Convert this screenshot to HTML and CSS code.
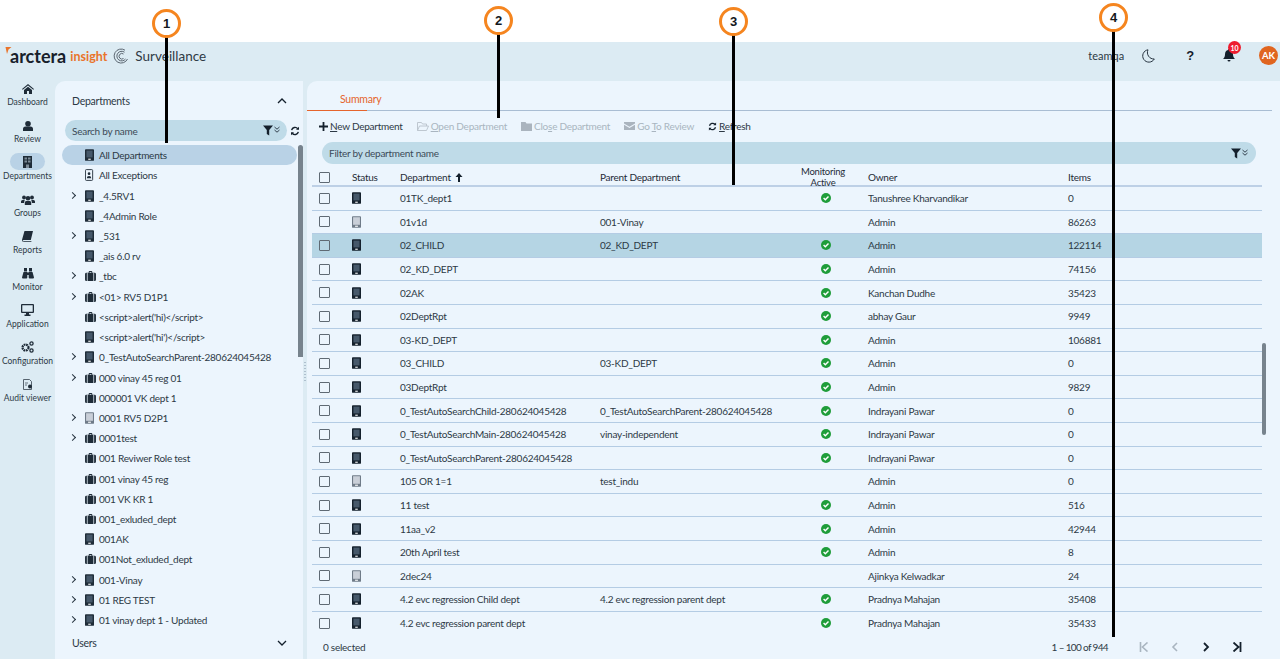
FILE: index.html
```html
<!DOCTYPE html>
<html lang="en">
<head>
<meta charset="utf-8">
<title>Arctera Insight Surveillance</title>
<link rel="stylesheet" href="styles.css">
</head>
<body>
<svg class="defs" width="0" height="0">
  <symbol id="dev" viewBox="0 0 10 13"><path d="M1 0h8a1 1 0 0 1 1 1v11a1 1 0 0 1-1 1H1a1 1 0 0 1-1-1V1a1 1 0 0 1 1-1z" fill="currentColor"/><rect x="1.6" y="1.6" width="6.8" height="7.6" fill="#46586a"/><rect x="3.6" y="10.6" width="2.8" height="1.2" fill="#fff"/></symbol>
  <symbol id="grey" viewBox="0 0 10 13"><path d="M1 0h8a1 1 0 0 1 1 1v11a1 1 0 0 1-1 1H1a1 1 0 0 1-1-1V1a1 1 0 0 1 1-1z" fill="#6f7b88"/><rect x="1.2" y="1.2" width="7.6" height="8.4" fill="#c9cfd8"/><rect x="3.4" y="10.6" width="3.2" height="1.2" fill="#fff"/></symbol>
  <symbol id="case" viewBox="0 0 12 11"><path d="M4 2V1a1 1 0 0 1 1-1h2a1 1 0 0 1 1 1v1h2.5A1.500 1.500 0 0 1 12 3.500V9.500A1.500 1.500 0 0 1 10.500 11H1.500A1.500 1.500 0 0 1 0 9.500V3.500A1.500 1.500 0 0 1 1.500 2zM5 1v1h2V1z" fill="#1f2c38" fill-rule="evenodd"/><path d="M2.500 2v9M9.500 2v9" stroke="#ecf5fd" stroke-width=".8"/></symbol>
  <symbol id="ok" viewBox="0 0 10 10"><circle cx="5" cy="5" r="5" fill="#1f9d3a"/><path d="M2.600 5.100l1.700 1.700 3.200-3.400" fill="none" stroke="#fff" stroke-width="1.400"/></symbol>
  <symbol id="funnel" viewBox="0 0 18 11"><path d="M0 .5h10L6.200 5v5.500L3.800 9V5z" fill="#14202c"/><path d="M11.500 2l2.500 2.200L16.500 2M11.500 5l2.500 2.200L16.500 5" fill="none" stroke="#33424f" stroke-width="1"/></symbol>
  <symbol id="sync" viewBox="0 0 12 12"><path d="M2 5a4.200 4.200 0 0 1 7.300-1.800M10 7a4.200 4.200 0 0 1-7.300 1.800" fill="none" stroke="#14202c" stroke-width="1.700"/><path d="M10.800 .8v3.600H7.200zM1.200 11.200V7.600h3.600z" fill="#14202c"/></symbol>
</svg>

<header class="topstrip"></header>
<div class="appbar">
  <div class="brand">
    <svg class="logo-mark" width="7" height="7" viewBox="0 0 6 7"><path d="M0 0h6L3 2.500 1.500 7z" fill="#e9742b"/></svg>
    <span class="logo-arctera">arctera</span>
    <span class="logo-insight">insight</span>
    <svg class="logo-swirl" width="16" height="16" viewBox="0 0 16 16" fill="none" stroke="#5a6570" stroke-width="1"><path d="M12 2.200A7 7 0 1 0 14.500 11M11.500 4.200A4.800 4.800 0 1 0 12.500 11M10.500 6A2.800 2.800 0 1 0 10.500 10.500"/></svg>
    <span class="logo-product">Surveillance</span>
  </div>
  <div class="bar-tools">
    <span class="user">teamqa</span>
    <svg class="moon" width="13" height="14" viewBox="0 0 13 14"><path d="M6 .8A6.200 6.200 0 1 0 12.300 10 6.500 6.500 0 0 1 6 .8z" fill="none" stroke="#26333f" stroke-width="1"/></svg>
    <span class="help">?</span>
    <span class="bell">
      <svg width="12" height="13" viewBox="0 0 12 13"><path d="M6 0a1 1 0 0 1 1 1.100C9 1.600 10 3.200 10 5.500c0 2.500 1 3.500 2 4.500H0c1-1 2-2 2-4.500C2 3.200 3 1.600 5 1.100A1 1 0 0 1 6 0zM4.500 11h3a1.500 1.500 0 0 1-3 0z" fill="#14202c"/></svg>
      <span class="badge">10</span>
    </span>
    <span class="avatar">AK</span>
  </div>
</div>

<div class="main">
  <nav class="rail">
    <a class="rail-item"><svg width="12" height="10" viewBox="0 0 12 10"><path d="M6 0l6 5-.7.800L6 1.500.7 5.800 0 5zM2 6l4-3.300L10 6v4H7V7H5v3H2z" fill="#1f2c38"/></svg><span>Dashboard</span></a>
    <a class="rail-item"><svg width="10" height="10" viewBox="0 0 10 10"><circle cx="5" cy="2.800" r="2.800" fill="#1f2c38"/><path d="M0 10V8a2.500 2.500 0 0 1 2.500-2.500h5A2.500 2.500 0 0 1 10 8v2z" fill="#1f2c38"/></svg><span>Review</span></a>
    <a class="rail-item is-active"><svg width="9" height="12" viewBox="0 0 9 12"><path d="M0 0h9v12H0z" fill="#1f2c38"/><path d="M1.500 1.500h2.500v2H1.500zM5 1.500h2.500v2H5zM1.500 4.500h2.500v2H1.500zM5 4.500h2.500v2H5zM3 8.500h3V12H3z" fill="#7d8b98"/></svg><span>Departments</span></a>
    <a class="rail-item"><svg width="14" height="10" viewBox="0 0 14 10" fill="#1f2c38"><circle cx="3" cy="2.500" r="1.900"/><circle cx="11" cy="2.500" r="1.900"/><circle cx="7" cy="3.200" r="2.300"/><path d="M0 8V6.500A1.500 1.500 0 0 1 1.500 5h2.200L3 8zM14 8V6.500A1.500 1.500 0 0 0 12.500 5h-2.200l.7 3zM3.800 10V7.500A1.500 1.500 0 0 1 5.300 6h3.400a1.500 1.500 0 0 1 1.500 1.500V10z"/></svg><span>Groups</span></a>
    <a class="rail-item"><svg width="11" height="11" viewBox="0 0 11 11"><path d="M2.500 0H11L8.800 9H1.800C.8 9 .5 9.500.8 10s.8.300 1.300.300H9.500L9.300 11H2C.5 11-.3 10 .1 8.500z" fill="#1f2c38"/></svg><span>Reports</span></a>
    <a class="rail-item"><svg width="12" height="12" viewBox="0 0 12 12" fill="#1f2c38"><path d="M2 1h3v3.500H2zM7 1h3v3.500H7z"/><path d="M1.500 5H5.300V10.500A1 1 0 0 1 4.300 11.500H1A1 1 0 0 1 0 10.500zM6.700 5H10.500L12 10.500A1 1 0 0 1 11 11.500H7.700A1 1 0 0 1 6.700 10.500zM5 5.500H7V8H5z"/></svg><span>Monitor</span></a>
    <a class="rail-item"><svg width="13" height="12" viewBox="0 0 13 12"><path d="M1 0h11a1 1 0 0 1 1 1v7a1 1 0 0 1-1 1H8v1.500h1.500V12h-6v-1.500H5V9H1a1 1 0 0 1-1-1V1a1 1 0 0 1 1-1zm.3 1.300v6.400h10.400V1.300z" fill="#1f2c38" fill-rule="evenodd"/></svg><span>Application</span></a>
    <a class="rail-item"><svg width="13" height="12" viewBox="0 0 13 12"><circle cx="4.500" cy="6.500" r="3" fill="none" stroke="#1f2c38" stroke-width="2.200" stroke-dasharray="1.800 .6"/><circle cx="10.500" cy="2.500" r="1.600" fill="none" stroke="#1f2c38" stroke-width="1.300"/><circle cx="10.500" cy="9.500" r="1.600" fill="none" stroke="#1f2c38" stroke-width="1.300"/></svg><span>Configuration</span></a>
    <a class="rail-item"><svg width="10" height="11" viewBox="0 0 10 11"><path d="M.5.500h6l2 2v8h-8z" fill="none" stroke="#46535f" stroke-width=".9"/><path d="M2 4h3M2 6h2" stroke="#46535f" stroke-width=".8"/><circle cx="7" cy="7.500" r="2" fill="#1f2c38"/></svg><span>Audit viewer</span></a>
  </nav>

  <aside class="tree-panel">
    <div class="tree-head">
      <span>Departments</span>
      <svg width="10" height="6" viewBox="0 0 10 6"><path d="M1 5l4-4 4 4" fill="none" stroke="#14202c" stroke-width="1.300"/></svg>
    </div>
    <div class="tree-search">
      <div class="pill-input pill-search"><span>Search by name</span><svg width="18" height="11"><use href="#funnel"/></svg></div>
      <svg class="sync-btn" width="10" height="10"><use href="#sync"/></svg>
    </div>
    <ul class="tree">
      <li class="is-selected"><i></i><svg class="d"><use href="#dev"/></svg>All Departments</li>
      <li><i></i><svg class="d" viewBox="0 0 10 13"><rect x=".5" y=".5" width="8" height="12" rx="1" fill="none" stroke="#1f2c38"/><circle cx="4.500" cy="5" r="1.500" fill="#1f2c38"/><path d="M2 10a2.500 2.500 0 0 1 5 0z" fill="#1f2c38"/></svg>All Exceptions</li>
      <li><i class="x"></i><svg class="d"><use href="#dev"/></svg>_4.5RV1</li>
      <li><i></i><svg class="d"><use href="#dev"/></svg>_4Admin Role</li>
      <li><i class="x"></i><svg class="d"><use href="#dev"/></svg>_531</li>
      <li><i></i><svg class="d"><use href="#dev"/></svg>_ais 6.0 rv</li>
      <li><i class="x"></i><svg class="c"><use href="#case"/></svg>_tbc</li>
      <li><i class="x"></i><svg class="c"><use href="#case"/></svg>&lt;01&gt; RV5 D1P1</li>
      <li><i></i><svg class="c"><use href="#case"/></svg>&lt;script&gt;alert('hi)&lt;/script&gt;</li>
      <li><i></i><svg class="d"><use href="#dev"/></svg>&lt;script&gt;alert('hi')&lt;/script&gt;</li>
      <li><i class="x"></i><svg class="d"><use href="#dev"/></svg>0_TestAutoSearchParent-280624045428</li>
      <li><i class="x"></i><svg class="c"><use href="#case"/></svg>000 vinay 45 reg 01</li>
      <li><i></i><svg class="c"><use href="#case"/></svg>000001 VK dept 1</li>
      <li><i class="x"></i><svg class="d"><use href="#grey"/></svg>0001 RV5 D2P1</li>
      <li><i class="x"></i><svg class="c"><use href="#case"/></svg>0001test</li>
      <li><i></i><svg class="c"><use href="#case"/></svg>001 Reviwer Role test</li>
      <li><i></i><svg class="c"><use href="#case"/></svg>001 vinay 45 reg</li>
      <li><i></i><svg class="c"><use href="#case"/></svg>001 VK KR 1</li>
      <li><i></i><svg class="c"><use href="#case"/></svg>001_exluded_dept</li>
      <li><i></i><svg class="d"><use href="#dev"/></svg>001AK</li>
      <li><i></i><svg class="c"><use href="#case"/></svg>001Not_exluded_dept</li>
      <li><i class="x"></i><svg class="d"><use href="#dev"/></svg>001-Vinay</li>
      <li><i class="x"></i><svg class="d"><use href="#dev"/></svg>01 REG TEST</li>
      <li><i class="x"></i><svg class="d"><use href="#dev"/></svg>01 vinay dept 1 - Updated</li>
    </ul>
    <div class="tree-foot">
      <span>Users</span>
      <svg width="10" height="6" viewBox="0 0 10 6"><path d="M1 1l4 4 4-4" fill="none" stroke="#14202c" stroke-width="1.300"/></svg>
    </div>
    <div class="tree-scroll"></div>
  </aside>

  <section class="content">
    <div class="tabs"><span class="tab">Summary</span></div>
    <div class="toolbar">
      <span class="tool"><svg width="9" height="9" viewBox="0 0 9 9"><path d="M3.600 0h1.800v3.600H9v1.800H5.400V9H3.600V5.400H0V3.600h3.600z" fill="#14202c"/></svg><span><u>N</u>ew Department</span></span>
      <span class="tool off"><svg width="12" height="9" viewBox="0 0 12 9"><path d="M.5 8.500V.5h4l1 1.500h4v2M.5 8.500l2-4.500h9l-2 4.500z" fill="none" stroke="#b9c2cb" stroke-width=".9"/></svg><span><u>O</u>pen Department</span></span>
      <span class="tool off"><svg width="11" height="9" viewBox="0 0 11 9"><path d="M0 0h4.500l1 1.500H11V9H0z" fill="#aab4be"/></svg><span>Clo<u>s</u>e Department</span></span>
      <span class="tool off"><svg width="11" height="8" viewBox="0 0 11 8"><path d="M0 0h11v1.500L5.500 4.800 0 1.500zM0 2.800l5.500 3.200L11 2.800V8H0z" fill="#aab4be"/></svg><span>Go <u>T</u>o Review</span></span>
      <span class="tool"><svg width="9" height="9"><use href="#sync"/></svg><span><u>R</u>efresh</span></span>
    </div>
    <div class="pill-input pill-filter"><span>Filter by department name</span><svg width="18" height="11"><use href="#funnel"/></svg></div>

    <div class="grid-wrap">
      <div class="row head">
        <b class="cb"></b><span>Status</span><span>Department <svg class="sort" width="8" height="9" viewBox="0 0 8 9"><path d="M4 0l3.500 4H5v5H3V4H.5z" fill="#14202c"/></svg></span><span>Parent Department</span><span class="mon">Monitoring Active</span><span>Owner</span><span>Items</span>
      </div>
      <div class="row"><b class="cb"></b><span><svg class="st"><use href="#dev"/></svg></span><span>01TK_dept1</span><span></span><span class="mon"><svg class="okk"><use href="#ok"/></svg></span><span>Tanushree Kharvandikar</span><span>0</span></div>
      <div class="row"><b class="cb"></b><span><svg class="st"><use href="#grey"/></svg></span><span>01v1d</span><span>001-Vinay</span><span class="mon"></span><span>Admin</span><span>86263</span></div>
      <div class="row is-picked"><b class="cb"></b><span><svg class="st"><use href="#dev"/></svg></span><span>02_CHILD</span><span>02_KD_DEPT</span><span class="mon"><svg class="okk"><use href="#ok"/></svg></span><span>Admin</span><span>122114</span></div>
      <div class="row"><b class="cb"></b><span><svg class="st"><use href="#dev"/></svg></span><span>02_KD_DEPT</span><span></span><span class="mon"><svg class="okk"><use href="#ok"/></svg></span><span>Admin</span><span>74156</span></div>
      <div class="row"><b class="cb"></b><span><svg class="st"><use href="#dev"/></svg></span><span>02AK</span><span></span><span class="mon"><svg class="okk"><use href="#ok"/></svg></span><span>Kanchan Dudhe</span><span>35423</span></div>
      <div class="row"><b class="cb"></b><span><svg class="st"><use href="#dev"/></svg></span><span>02DeptRpt</span><span></span><span class="mon"><svg class="okk"><use href="#ok"/></svg></span><span>abhay Gaur</span><span>9949</span></div>
      <div class="row"><b class="cb"></b><span><svg class="st"><use href="#dev"/></svg></span><span>03-KD_DEPT</span><span></span><span class="mon"><svg class="okk"><use href="#ok"/></svg></span><span>Admin</span><span>106881</span></div>
      <div class="row"><b class="cb"></b><span><svg class="st"><use href="#dev"/></svg></span><span>03_CHILD</span><span>03-KD_DEPT</span><span class="mon"><svg class="okk"><use href="#ok"/></svg></span><span>Admin</span><span>0</span></div>
      <div class="row"><b class="cb"></b><span><svg class="st"><use href="#dev"/></svg></span><span>03DeptRpt</span><span></span><span class="mon"><svg class="okk"><use href="#ok"/></svg></span><span>Admin</span><span>9829</span></div>
      <div class="row"><b class="cb"></b><span><svg class="st"><use href="#dev"/></svg></span><span>0_TestAutoSearchChild-280624045428</span><span>0_TestAutoSearchParent-280624045428</span><span class="mon"><svg class="okk"><use href="#ok"/></svg></span><span>Indrayani Pawar</span><span>0</span></div>
      <div class="row"><b class="cb"></b><span><svg class="st"><use href="#dev"/></svg></span><span>0_TestAutoSearchMain-280624045428</span><span>vinay-independent</span><span class="mon"><svg class="okk"><use href="#ok"/></svg></span><span>Indrayani Pawar</span><span>0</span></div>
      <div class="row"><b class="cb"></b><span><svg class="st"><use href="#dev"/></svg></span><span>0_TestAutoSearchParent-280624045428</span><span></span><span class="mon"><svg class="okk"><use href="#ok"/></svg></span><span>Indrayani Pawar</span><span>0</span></div>
      <div class="row"><b class="cb"></b><span><svg class="st"><use href="#grey"/></svg></span><span>105 OR 1=1</span><span>test_indu</span><span class="mon"></span><span>Admin</span><span>0</span></div>
      <div class="row"><b class="cb"></b><span><svg class="st"><use href="#dev"/></svg></span><span>11 test</span><span></span><span class="mon"><svg class="okk"><use href="#ok"/></svg></span><span>Admin</span><span>516</span></div>
      <div class="row"><b class="cb"></b><span><svg class="st"><use href="#dev"/></svg></span><span>11aa_v2</span><span></span><span class="mon"><svg class="okk"><use href="#ok"/></svg></span><span>Admin</span><span>42944</span></div>
      <div class="row"><b class="cb"></b><span><svg class="st"><use href="#dev"/></svg></span><span>20th April test</span><span></span><span class="mon"><svg class="okk"><use href="#ok"/></svg></span><span>Admin</span><span>8</span></div>
      <div class="row"><b class="cb"></b><span><svg class="st"><use href="#grey"/></svg></span><span>2dec24</span><span></span><span class="mon"></span><span>Ajinkya Kelwadkar</span><span>24</span></div>
      <div class="row"><b class="cb"></b><span><svg class="st"><use href="#dev"/></svg></span><span>4.2 evc regression Child dept</span><span>4.2 evc regression parent dept</span><span class="mon"><svg class="okk"><use href="#ok"/></svg></span><span>Pradnya Mahajan</span><span>35408</span></div>
      <div class="row last"><b class="cb"></b><span><svg class="st"><use href="#dev"/></svg></span><span>4.2 evc regression parent dept</span><span></span><span class="mon"><svg class="okk"><use href="#ok"/></svg></span><span>Pradnya Mahajan</span><span>35433</span></div>
      <div class="grid-scroll"></div>
    </div>

    <div class="pager">
      <span>0 selected</span>
      <div class="pager-right">
        <span class="range">1 – 100 of 944</span>
        <svg width="10" height="10" viewBox="0 0 10 10"><path d="M1.500 0v10M8.500 .5L3.500 5l5 4.500" fill="none" stroke="#a9b5c0" stroke-width="1.600"/></svg>
        <svg width="10" height="10" viewBox="0 0 10 10"><path d="M7 1L3 5l4 4" fill="none" stroke="#a9b5c0" stroke-width="1.600"/></svg>
        <svg width="10" height="10" viewBox="0 0 10 10"><path d="M3 1l4 4-4 4" fill="none" stroke="#14202c" stroke-width="1.800"/></svg>
        <svg width="10" height="10" viewBox="0 0 10 10"><path d="M1.500 .5L6.500 5l-5 4.500M8.500 0v10" fill="none" stroke="#14202c" stroke-width="1.800"/></svg>
      </div>
    </div>
  </section>
</div>

<div class="callout c1"><span>1</span></div>
<div class="callout c2"><span>2</span></div>
<div class="callout c3"><span>3</span></div>
<div class="callout c4"><span>4</span></div>
</body>
</html>
```

FILE: styles.css
```css
* { box-sizing: border-box; }
html, body { margin: 0; height: 659px; overflow: hidden; background: #fff; }
body { position: relative; font-family: "Lato", "Liberation Sans", sans-serif; font-size: 10px; letter-spacing: -.25px; color: #2c3945; }
.defs { position: absolute; }
svg { display: block; flex: none; }

.topstrip { height: 42px; background: #fff; }
.appbar { height: 39px; background: #dcebf3; display: flex; justify-content: space-between; align-items: center; padding: 0 2px 0 5px; }
.brand { display: flex; align-items: center; height: 26px; position: relative; top: -6px; }
.logo-mark { margin-right: -2px; margin-top: -10px; }
.logo-arctera { font: 700 18px "Lato", sans-serif; color: #17202a; letter-spacing: 0; }
.logo-insight { font: 700 12.5px "Lato", sans-serif; color: #e9742b; margin-left: 4px; margin-top: 2px; letter-spacing: 0; }
.logo-swirl { margin-left: 6px; }
.logo-product { font-size: 13.5px; color: #2f3a45; margin-left: 6px; letter-spacing: 0; }
.bar-tools { display: flex; align-items: center; position: relative; top: -6px; }
.user { font-size: 11px; letter-spacing: 0; width: 40px; white-space: nowrap; }
.moon { margin-left: 14px; }
.help { font: 700 13px "Liberation Sans", sans-serif; color: #14202c; margin-left: 31px; }
.bell { margin-left: 29px; position: relative; }
.badge { position: absolute; left: 5px; top: -8px; width: 13px; height: 13px; border-radius: 50%; background: #ee1c2e; color: #fff; font-size: 7px; font-weight: 700; display: flex; align-items: center; justify-content: center; letter-spacing: 0; }
.avatar { margin-left: 24px; width: 19px; height: 19px; border-radius: 50%; background: #e0651f; color: #fff; font-size: 9.5px; font-weight: 700; display: flex; align-items: center; justify-content: center; letter-spacing: 0; }

.main { display: flex; height: 578px; background: #dcebf3; }
.rail { width: 55px; flex: none; display: flex; flex-direction: column; margin-top: -11px; }
.rail-item { height: 37.05px; flex: none; display: flex; flex-direction: column; align-items: center; justify-content: flex-end; gap: 3px; font-size: 8.5px; letter-spacing: 0; color: #2d3a46; white-space: nowrap; position: relative; }
.rail-item span { line-height: 10px; }
.is-active::before { content: ""; position: absolute; left: 10px; top: 9px; width: 35px; height: 17px; border-radius: 9px; background: #b9d2e6; }
.is-active svg, .is-active span { position: relative; }

.tree-panel { width: 248px; flex: none; background: #ecf5fd; border-radius: 10px 0 0 0; position: relative; padding: 0 6px 0 7px; }
.tree-head { display: flex; justify-content: space-between; align-items: center; height: 39px; padding: 0 10px; font-size: 10.5px; }
.tree-foot { display: flex; justify-content: space-between; align-items: center; height: 26px; padding: 0 10px; font-size: 10.5px; }
.tree-search { display: flex; align-items: center; gap: 3px; height: 21px; margin: 0 -3px 0 3px; }
.pill-input { display: flex; justify-content: space-between; align-items: center; background: #bfdbe8; border-radius: 11px; color: #3b4a57; }
.pill-search { width: 222px; height: 21px; padding: 0 6px 0 7px; }
.sync-btn { width: 10px; height: 10px; }
.tree { list-style: none; margin: 4px 0 0; padding: 0; }
.tree li { height: 20.23px; display: flex; align-items: center; white-space: nowrap; padding-left: 7px; border-radius: 10px; }
.tree li.is-selected { background: #b9d2e6; width: 235px; }
.tree i { width: 16px; flex: none; display: block; height: 7px; }
.tree i.x { position: relative; }
.tree i.x::before { content: ""; position: absolute; left: 1px; top: .5px; width: 4px; height: 4px; border: solid #26333f; border-width: 1px 1px 0 0; transform: rotate(45deg); }
.tree .d { width: 9px; height: 12px; color: #1f2c38; margin-right: 5px; }
.tree .c { width: 11px; height: 10px; margin-right: 3px; }
.tree-scroll { position: absolute; right: 0; top: 64px; width: 5px; height: 212px; background: #77838d; border-radius: 3px 3px 0 0; }

.content { flex: 1; margin-left: 4px; background: #ecf5fd; border-radius: 10px 0 0 0; position: relative; min-width: 0; }
.content::before { content: ""; position: absolute; left: -3px; top: 281px; width: 2px; height: 20px; background: repeating-linear-gradient(180deg, #aebfce 0 1px, transparent 1px 3px); }
.tabs { height: 30px; border-bottom: 1px solid #a9bdd3; margin-right: 8px; }
.tab { display: flex; align-items: center; width: 60px; height: 30px; padding: 6px 0 0 33px; color: #e5642c; font-size: 10.5px; white-space: nowrap; border-bottom: 1px solid #e5642c; }
.toolbar { display: flex; align-items: center; height: 30px; padding-left: 12px; gap: 14px; margin-bottom: 1px; }
.tool { display: flex; align-items: center; gap: 2px; white-space: nowrap; }
.tool.off { color: #a9b5c0; }
.pill-filter { width: 934px; height: 22px; margin-left: 15px; padding: 0 7px; }
.grid-wrap { margin-left: 5px; width: 950px; position: relative; }
.row { display: grid; grid-template-columns: 33px 48px 200px 200px 68px 200px 1fr; align-items: center; height: 23.6px; border-bottom: 1px solid #b4cce4; padding-left: 7px; white-space: nowrap; }
.row.head { height: 23px; padding-top: 2px; border-bottom: 2px solid #bdd0e6; color: #1f2c38; }
.row.last { border-bottom: 0; }
.row.is-picked { background: #b5d5e4; }
.row .cb { display: block; width: 11px; height: 11px; border: 1px solid #5f6a74; border-radius: 1px; }
.mon { width: 50px; text-align: center; white-space: normal; line-height: 11px; }
.head .mon { margin-left: -2px; font-size: 9.5px; }
.st { width: 9px; height: 12px; color: #14202c; }
.okk { width: 10px; height: 10px; margin: 0 auto; transform: translateX(1px); }
.sort { display: inline-block; margin-left: 2px; vertical-align: -1px; }
.grid-scroll { position: absolute; right: -4px; top: 179px; width: 4px; height: 92px; background: #77838d; border-radius: 2px; }

.pager { display: flex; justify-content: space-between; align-items: center; height: 24px; padding: 0 38px 0 16px; }
.pager-right { display: flex; align-items: center; gap: 21px; }
.range { margin-right: 10px; letter-spacing: -.65px; }

.callout { position: absolute; width: 3px; background: #000; }
.callout span { position: absolute; left: -13px; top: -13px; width: 29px; height: 29px; border-radius: 50%; background: #fff; border: 3px solid #f5851f; color: #14181c; font: 700 13px "Liberation Sans", sans-serif; letter-spacing: 0; display: flex; align-items: center; justify-content: center; }
.c1 { left: 165px; top: 22px; height: 121px; }
.c2 { left: 497px; top: 19px; height: 99px; }
.c3 { left: 732px; top: 20px; height: 165px; }
.c4 { left: 1112px; top: 16px; height: 621px; }
```
